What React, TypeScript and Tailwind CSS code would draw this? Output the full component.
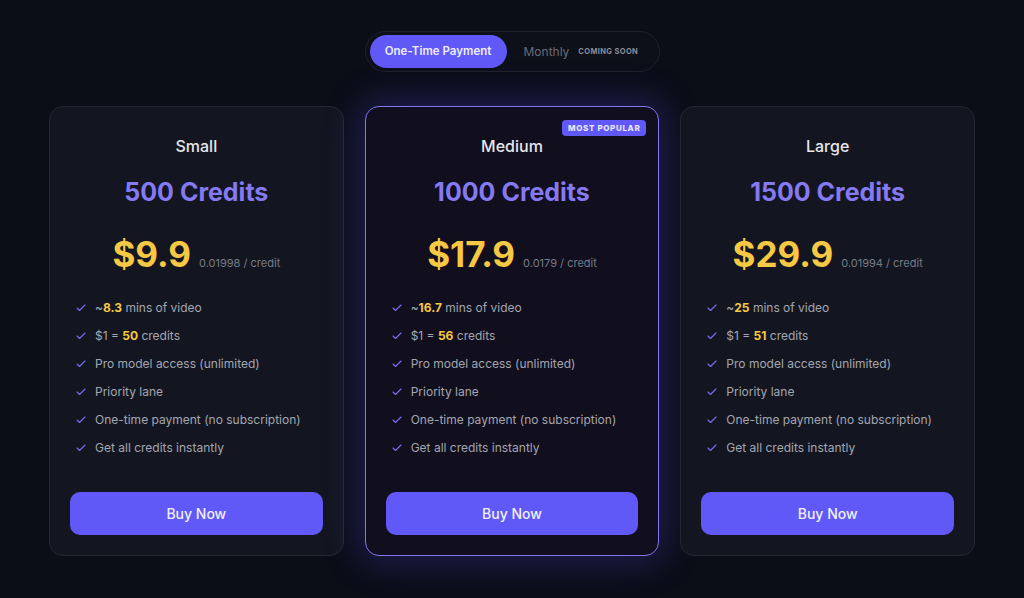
import React from 'react';
import { Check } from 'lucide-react';

interface Plan {
  name: string;
  credits: string;
  price: string;
  perCredit: string;
  mins: string;
  rate: string;
  popular?: boolean;
}

const plans: Plan[] = [
  { name: 'Small', credits: '500 Credits', price: '$9.9', perCredit: '0.01998 / credit', mins: '8.3', rate: '50' },
  { name: 'Medium', credits: '1000 Credits', price: '$17.9', perCredit: '0.0179 / credit', mins: '16.7', rate: '56', popular: true },
  { name: 'Large', credits: '1500 Credits', price: '$29.9', perCredit: '0.01994 / credit', mins: '25', rate: '51' },
];

function Feature({ children }: { children: React.ReactNode }) {
  return (
    <li className="flex items-center h-5 text-[12px] text-[#a3a6b0]">
      <Check className="w-3 h-3 ml-[5px] mr-[8px] text-[#7b6ff2]" strokeWidth={2.2} />
      <span>{children}</span>
    </li>
  );
}

function PlanCard({ plan }: { plan: Plan }) {
  return (
    <div
      className={
        plan.popular
          ? 'relative flex flex-col h-[450px] rounded-[14px] border border-[#8176f0] bg-[#110e1d] px-5 pt-[27px] pb-5 shadow-[0_0_36px_6px_rgba(90,80,240,0.28)]'
          : 'relative flex flex-col h-[450px] rounded-[14px] border border-[#252833] bg-[#131620] px-5 pt-[27px] pb-5'
      }
    >
      {plan.popular && (
        <span className="absolute top-[13px] right-[12px] rounded-[4px] bg-[#6059f7] px-[6px] py-[2px] text-[8px] font-extrabold tracking-[0.08em] leading-[12px] text-[#e8e6ff]">
          MOST POPULAR
        </span>
      )}
      <h3 className="text-center text-[16px] leading-6 font-medium text-[#e6e7ec]">{plan.name}</h3>
      <div className="mt-[18px] text-center text-[25px] leading-8 font-bold text-[#8579f4]">{plan.credits}</div>
      <div className="mt-[26px] flex items-baseline justify-center gap-2">
        <span className="text-[35px] leading-10 font-bold text-[#f7c844]">{plan.price}</span>
        <span className="text-[11px] text-[#777b87]">{plan.perCredit}</span>
      </div>
      <ul className="mt-[24px] flex flex-col gap-2">
        <Feature>
          ~<span className="font-bold text-[#f7c844]">{plan.mins}</span> mins of video
        </Feature>
        <Feature>
          $1 = <span className="font-bold text-[#f7c844]">{plan.rate}</span> credits
        </Feature>
        <Feature>Pro model access (unlimited)</Feature>
        <Feature>Priority lane</Feature>
        <Feature>One-time payment (no subscription)</Feature>
        <Feature>Get all credits instantly</Feature>
      </ul>
      <button className="mt-auto h-[43px] w-full rounded-[10px] bg-[#6059f7] text-[14px] font-medium text-[#f1f0ff]">
        Buy Now
      </button>
    </div>
  );
}

export default function App() {
  return (
    <div
      className="min-h-[598px] w-full bg-[#0b0d17] pt-[31px]"
      style={{ fontFamily: 'Inter, "Noto Sans", sans-serif' }}
    >
      <div className="flex justify-center">
        <div className="flex items-center h-[41px] w-[295px] rounded-full border border-[#1f222c] bg-[#0d0f19] px-1">
          <button className="h-[33px] w-[137px] rounded-full bg-[#6059f7] text-[11.5px] font-semibold text-[#eeeeff]">
            One-Time Payment
          </button>
          <span className="ml-[17px] text-[12px] text-[#676b78]">Monthly</span>
          <span className="ml-[9px] text-[7.5px] font-bold tracking-[0.05em] text-[#8a8d98]">COMING SOON</span>
        </div>
      </div>
      <div className="mx-auto mt-[34px] grid w-[926px] grid-cols-3 gap-[21px]">
        {plans.map(p => (
          <PlanCard key={p.name} plan={p} />
        ))}
      </div>
    </div>
  );
}
